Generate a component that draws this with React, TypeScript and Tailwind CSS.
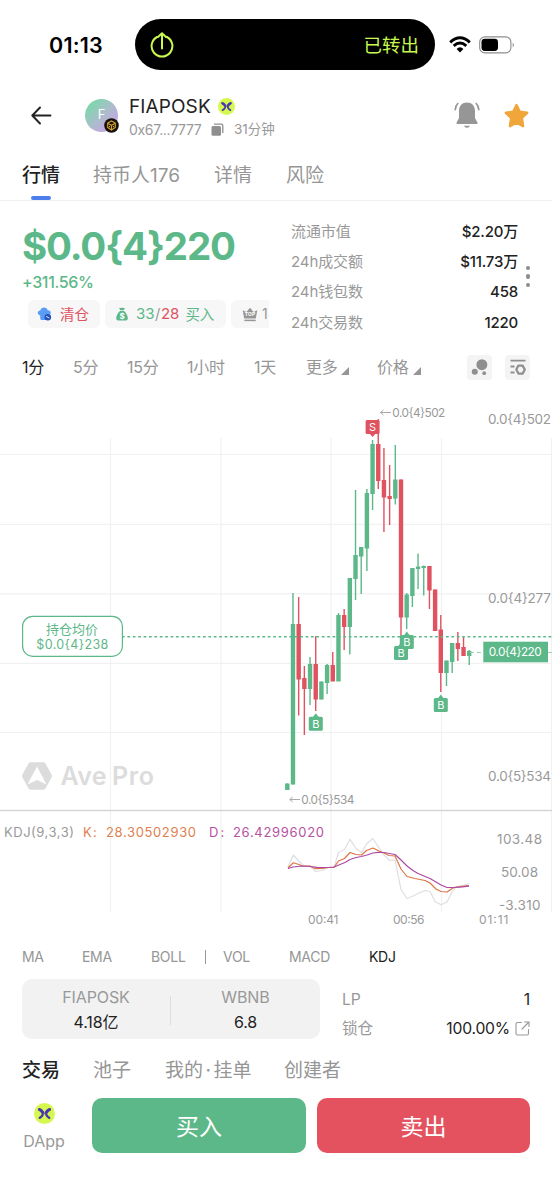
import { useState } from "react";
import { clsx } from "clsx";

interface Candle {
  high: number;
  low: number;
  top: number;
  bottom: number;
  up: boolean;
}

interface MarkerProps {
  x: number;
  y: number;
  label: "B" | "S";
}

const GREEN = "#5cb888";
const RED = "#e05260";
const GRAY = "#999999";

// high, low, body top, body bottom, direction (chart pixels)
const rawCandles: [number, number, number, number, number][] = [
  [783.5, 790, 783.5, 790, 1],
  [593, 784.5, 624, 784.5, 1],
  [597, 715.5, 624, 679.5, 0],
  [666, 735, 678, 689, 0],
  [657, 705, 664, 689, 1],
  [636, 711, 664, 699.5, 0],
  [681.5, 699.5, 681.5, 699.5, 1],
  [664, 694, 665, 683, 1],
  [652, 681, 665, 681.5, 0],
  [613, 681, 615, 681.5, 1],
  [609, 650, 615, 627, 0],
  [578, 654.5, 578, 627, 1],
  [490, 600, 555, 579, 1],
  [547, 594, 547, 556.5, 1],
  [489, 571, 493, 548.5, 1],
  [440, 510, 444, 494, 1],
  [419, 489, 444, 481, 0],
  [448, 532, 480, 497.5, 0],
  [465, 525, 496, 499, 0],
  [445, 504.5, 479.5, 498.5, 1],
  [479.5, 636, 479.5, 617.5, 0],
  [593, 629, 594.5, 617.5, 1],
  [568, 607, 568, 596, 1],
  [553.5, 589, 566.5, 569, 1],
  [565.5, 595.5, 566, 568, 1],
  [566, 609, 566, 590.5, 0],
  [589.5, 631, 589.5, 631, 0],
  [615, 692, 629.5, 673, 0],
  [660.5, 686, 660.5, 673, 1],
  [643, 673, 643, 662, 1],
  [632, 661, 643, 649, 0],
  [637, 656, 647, 656, 0],
  [650, 665, 651, 656, 1],
];

const candles: Candle[] = rawCandles.map(([high, low, top, bottom, up]) => ({
  high,
  low,
  top,
  bottom,
  up: up === 1,
}));

const stats = [
  { label: "流通市值", value: "$2.20万" },
  { label: "24h成交额", value: "$11.73万" },
  { label: "24h钱包数", value: "458" },
  { label: "24h交易数", value: "1220" },
];

const DAppLogo = ({ className }: { className?: string }) => (
  <svg viewBox="0 0 20 20" className={className}>
    <circle cx="10" cy="10" r="10" fill="#d5f84f" />
    <g fill="none" stroke="#4a35b0" strokeLinecap="round">
      <path d="M5.2 6.2Q7.2 6.9 8.3 9M14.8 6.2Q12.8 6.9 11.7 9" strokeWidth="3" />
      <path d="M5.5 14.2Q7.3 13.4 8.3 11.3M14.5 14.2Q12.7 13.4 11.7 11.3" strokeWidth="2.2" />
      <path d="M8.4 10.2H11.6" strokeWidth="0.8" />
    </g>
  </svg>
);

const StatusBar = () => (
  <div className="flex h-[89px] items-center">
    <span className="ml-[49px] w-[86px] pt-px text-[21.5px] font-semibold tracking-[0.2px] text-black">
      01:13
    </span>
    <div className="flex h-[51px] w-[300px] items-center justify-between rounded-full bg-black pr-4 pl-[15px] text-[#c9f84f]">
      <svg width="24" height="26" viewBox="0 0 24 26" fill="none" stroke="currentColor" strokeWidth="2" strokeLinecap="round" strokeLinejoin="round">
        <path d="M7 5A10.4 10.4 0 1 0 17 5" />
        <path d="M12 16.5V1.5M8 5L12 1.3L16 5" />
      </svg>
      <span className="pt-0.5 text-[18.5px]">已转出</span>
    </div>
    <svg className="ml-[14px]" width="22" height="17" viewBox="0 0 22 17">
      <path d="M1.2 6.3Q11-2.8 20.8 6.3" fill="none" stroke="#000" strokeWidth="3" />
      <path d="M4.7 9.9Q11 4.1 17.3 9.9" fill="none" stroke="#000" strokeWidth="2.8" />
      <path d="M7.6 12.9Q11 9.7 14.4 12.9L11 16.4Z" fill="#000" />
    </svg>
    <svg className="ml-2" width="37" height="18" viewBox="0 0 37 18">
      <rect x="0.7" y="0.9" width="31.2" height="16" rx="5.2" fill="none" stroke="#8d8d8d" strokeWidth="1.1" />
      <rect x="2.5" y="2.8" width="16.5" height="12.2" rx="3.4" fill="#000" />
      <path d="M33.7 6.5Q36 9 33.7 11.5Z" fill="#8d8d8d" />
    </svg>
  </div>
);

const TokenHeader = () => (
  <div className="flex h-[52px] items-center">
    <svg className="ml-[31px]" width="21" height="20" viewBox="0 0 21 20" fill="none" stroke="#222" strokeWidth="1.9" strokeLinecap="round" strokeLinejoin="round">
      <path d="M19.5 10.5H1.5M9 2.5L1.3 10.5L9 18.5" />
    </svg>
    <div className="relative ml-[33px] flex size-[33px] items-center justify-center rounded-full bg-linear-to-br from-[#82d3b0] from-20% to-[#c9a2e4] to-85% text-[13px] text-white">
      F
      <svg className="absolute right-[-1px] bottom-[-1px]" width="15" height="15" viewBox="0 0 15 15">
        <circle cx="7.5" cy="7.5" r="7.3" fill="#15120a" />
        <g fill="none" stroke="#d9a331" strokeWidth="1.1">
          <path d="M7.5 3L11.3 5.1V9.5L7.5 12L3.7 9.5V5.1Z" />
          <path d="M4 5.4L7.5 7.3L11 5.4M7.5 7.3V12M5.5 8V9.3M9.5 8V9.3" />
        </g>
      </svg>
    </div>
    <div className="ml-[11px] flex w-[324px] flex-col pt-[5px]">
      <div className="flex h-6 items-center gap-[7px]">
        <span className="w-[82px] pt-0.5 text-[19px] tracking-[0.1px] text-[#222]">FIAPOSK</span>
        <DAppLogo className="size-[17px]" />
      </div>
      <div className="flex h-[22px] items-center text-sm text-[#999]">
        <span className="w-[82px] tracking-[-0.3px]">0x67...7777</span>
        <svg width="13" height="13" viewBox="0 0 13 13">
          <rect x="0.5" y="3" width="9.5" height="9.7" rx="1.5" fill="#8f8f8f" />
          <path d="M3 1.2H10.3Q11.8 1.2 11.8 2.7V10" fill="none" stroke="#8f8f8f" strokeWidth="1.3" />
        </svg>
        <span className="ml-[10px] text-[13.5px]">31分钟</span>
      </div>
    </div>
    <svg width="28" height="28" viewBox="0 0 28 28">
      <g fill="#969696">
        <path d="M14 1.5C18.8 1.5 22 4.8 22 10V17L24.5 21.7Q25 23 23.5 23H4.5Q3 23 3.5 21.7L6 17V10C6 4.8 9.2 1.5 14 1.5Z" />
        <path d="M11 24.8H17Q16.2 26.8 14 26.8Q11.8 26.8 11 24.8Z" />
      </g>
      <path d="M4.8 2.5Q2.5 4.8 2.2 8.6M23.2 2.5Q25.5 4.8 25.8 8.6" fill="none" stroke="#969696" strokeWidth="1.7" strokeLinecap="round" />
    </svg>
    <svg className="ml-[22px]" width="27" height="27" viewBox="0 0 27 27">
      <path d="M13.5 3L16.8 9.7L24.2 10.8L18.9 16L20.1 24.2L13.5 20.7L6.9 24.2L8.1 16L2.8 10.8L10.2 9.7Z" fill="#f0a63a" stroke="#f0a63a" strokeWidth="2.4" strokeLinejoin="round" />
    </svg>
  </div>
);

const PageTabs = () => {
  const [active, setActive] = useState("行情");
  const tabs = ["行情", "持币人176", "详情", "风险"];

  return (
    <div className="grid h-[60px] grid-cols-[71px_121px_72px_60px] border-b border-[#f2f2f2] pl-[22px] text-[19px]">
      {tabs.map((tab) => (
        <button
          key={tab}
          onClick={() => setActive(tab)}
          className={clsx(
            "flex flex-col items-start pt-[21px] leading-7 whitespace-nowrap",
            active === tab ? "font-medium text-[#222]" : "text-[#969696]"
          )}
        >
          {tab}
          {active === tab && <span className="mt-[6px] ml-[9px] h-1 w-5 rounded-sm bg-[#4d7eee]" />}
        </button>
      ))}
    </div>
  );
};

const Summary = () => (
  <div className="flex h-[143px]">
    <div className="w-[269px] pt-[19px] pl-[22px]">
      <div className="h-[52px] text-[38.5px] leading-[52px] font-bold tracking-[-1.15px] text-[#5cb888]">
        $0.0&#123;4&#125;220
      </div>
      <div className="h-5 text-[16px] leading-5 font-medium tracking-[-0.35px] text-[#5cb888]">+311.56%</div>
      <div className="mt-2 ml-[6px] flex h-7 gap-[5px] text-[15px] whitespace-nowrap">
        <div className="flex w-[72px] shrink-0 items-center rounded-md bg-[#f7f7f7] pl-[9px] text-[#e05260]">
          <svg className="mr-2" width="15" height="14" viewBox="0 0 15 14">
            <path d="M3.2 8.5C-.4 7.6.2 3.3 3.4 3.4C4.2-.3 9.8-.3 10.7 3.2C14.2 3 14.8 7.4 11.5 8.3V13H4.5Q3.2 13 3.2 11Z" fill="#5b9cf5" />
            <circle cx="10.8" cy="10.2" r="3.3" fill="#2553bb" />
            <path d="M9.2 9.4L12.3 11" stroke="#fff" strokeWidth="0.9" />
          </svg>
          <span className="pt-0.5 text-[14.5px]">清仓</span>
        </div>
        <div className="flex w-[121px] shrink-0 items-center rounded-md bg-[#f7f7f7] pl-[11px] text-[#5cb888]">
          <svg className="mr-2" width="12" height="14" viewBox="0 0 12 14">
            <path d="M3 .8Q4.5 1.5 6 .5Q7.5 1.5 9 .8L7.8 3.2H4.2Z" fill={GREEN} />
            <path d="M4 4H8C10 5.5 12 9 11.8 11.6Q11.6 13.5 10 13.5H2Q.4 13.5.2 11.6C0 9 2 5.5 4 4Z" fill={GREEN} />
            <text x="6" y="11.9" textAnchor="middle" fontSize="8" fontWeight="700" fill="#fff">$</text>
          </svg>
          <span className="pt-px">33</span>
          <span className="px-[0.5px] pt-px text-[#999]">/</span>
          <span className="pt-px text-[#e05260]">28</span>
          <span className="ml-[6px] pt-0.5 text-[14.5px]">买入</span>
        </div>
        <div className="flex w-[38px] shrink-0 items-center rounded-l-md bg-[#f7f7f7] pl-[11px] text-sm text-[#999]">
          <svg className="mr-1" width="16" height="15" viewBox="0 0 16 15">
            <path d="M.7 3.3L4.4 5L8 .8L11.6 5L15.3 3.3L13.8 11.5H2.2Z" fill="#969696" />
            <path d="M2.3 13.4H13.7" stroke="#969696" strokeWidth="1.5" />
            <text x="8" y="9.3" textAnchor="middle" fontSize="5" fontWeight="700" fill="#fff">TOP</text>
          </svg>
          1
        </div>
      </div>
    </div>
    <div className="ml-[22px] flex w-[227px] flex-col pt-4">
      {stats.map(({ label, value }) => (
        <div key={label} className="flex h-[30.3px] items-center justify-between text-[15px]">
          <span className="tracking-[-0.1px] text-[#999]">{label}</span>
          <span className="font-medium tracking-[-0.2px] text-[#222]">{value}</span>
        </div>
      ))}
    </div>
    <div className="ml-2 flex flex-col gap-1 pt-[65px]">
      <span className="size-[4.4px] rounded-full bg-[#8c8c8c]" />
      <span className="size-[4.4px] rounded-full bg-[#8c8c8c]" />
      <span className="size-[4.4px] rounded-full bg-[#8c8c8c]" />
    </div>
  </div>
);

const Caret = () => (
  <svg className="mt-2" width="8" height="8" viewBox="0 0 8 8">
    <path d="M8 0V8H0Z" fill="#969696" />
  </svg>
);

const IntervalBar = () => (
  <div className="flex h-[46px] items-center pl-[22px] text-[16px] text-[#969696]">
    <div className="grid w-[445px] grid-cols-[51px_54px_60px_67px_52px_71px_90px] items-center tracking-[-0.2px] whitespace-nowrap">
      <span className="text-[#222]">1分</span>
      <span>5分</span>
      <span>15分</span>
      <span>1小时</span>
      <span>1天</span>
      <span className="flex items-center gap-[3px]">更多<Caret /></span>
      <span className="flex items-center gap-1">价格<Caret /></span>
    </div>
    <button className="flex size-[25px] items-center justify-center rounded bg-[#f4f4f4]">
      <svg width="17" height="17" viewBox="0 0 18 18" fill="#8f8f8f">
        <circle cx="11.5" cy="6" r="5.8" />
        <circle cx="4" cy="13.5" r="3.2" />
        <circle cx="14" cy="15" r="2" />
      </svg>
    </button>
    <button className="ml-[13px] flex size-[25px] items-center justify-center rounded bg-[#f4f4f4]">
      <svg width="16" height="16" viewBox="0 0 16 16" fill="none" stroke="#8f8f8f" strokeWidth="1.8">
        <path d="M.5 1.7H15.5M.5 7.5H4.5M.5 13.5H4.5" />
        <path d="M8.4 6.6H12.6L14.8 10.6L12.6 14.6H8.4L6.3 10.6Z" strokeWidth="2.2" strokeLinejoin="round" />
      </svg>
    </button>
  </div>
);

const Marker = ({ x, y, label }: MarkerProps) => {
  const isBuy = label === "B";
  const color = isBuy ? GREEN : RED;
  return (
    <g>
      <path d={isBuy ? `M${x - 3} ${y - 6.5}L${x} ${y - 10.5}L${x + 3} ${y - 6.5}Z` : `M${x - 3} ${y + 6.5}L${x} ${y + 10}L${x + 3} ${y + 6.5}Z`} fill={color} />
      <rect x={x - 7} y={y - 7} width="14" height="14" rx="1.5" fill={color} />
      <text x={x} y={y + 4} textAnchor="middle" fontSize="11" fill="#fff">{label}</text>
    </g>
  );
};

const PriceChart = () => (
  <svg className="block" width="552" height="545" viewBox="0 390 552 545" fill={GRAY} fontSize="13.5">
    <g stroke="#f1f1f1" strokeWidth="1.2">
      {[110.5, 221, 331, 441.5, 551.5].map((x) => (
        <line key={x} x1={x} x2={x} y1="438" y2="912" />
      ))}
      {[454.5, 524.3, 593.8, 663.3, 732.5].map((y) => (
        <line key={y} x1="0" x2="552" y1={y} y2={y} />
      ))}
    </g>
    <line x1="0" x2="552" y1="810.5" y2="810.5" stroke="#d6d6d6" strokeWidth="1.3" />

    {/* watermark */}
    <path d="M30.5 763H43.5Q44.5 763 45 764L51 775Q51.5 776 51 777L45 788Q44.5 789 43.5 789H30.5Q29.5 789 29 788L23 777Q22.5 776 23 775L29 764Q29.5 763 30.5 763Z" fill="#dcdcdc" stroke="#dcdcdc" strokeWidth="1.5" />
    <path d="M37 766.5L46.5 784.5L37 780L27.5 784.5Z" fill="#fff" />
    <text x="60.5" y="785" fontSize="25" fontWeight="600" fill="#dcdcdc" textLength="46">Ave</text>
    <text x="112" y="785" fontSize="25" fontWeight="600" fill="#dcdcdc" textLength="42">Pro</text>

    {candles.map((c, i) => {
      const x = 287.3 + i * 5.685;
      const color = c.up ? GREEN : RED;
      return (
        <g key={i} fill={color}>
          <rect x={x - 0.7} y={c.high} width="1.4" height={c.low - c.high} />
          <rect x={x - 2.2} y={c.top} width="4.4" height={c.bottom - c.top} />
        </g>
      );
    })}

    {/* average holding price */}
    <line x1="122" x2="552" y1="636.7" y2="636.7" stroke={GREEN} strokeWidth="1.4" strokeDasharray="2.7 2.7" />
    <rect x="22.6" y="616.3" width="99.8" height="40" rx="10" fill="#fff" stroke={GREEN} strokeWidth="1.2" />
    <g fill={GREEN} textAnchor="middle" fontSize="13">
      <text x="72" y="633.5">持仓均价</text>
      <text x="72.3" y="648.8" fontSize="12.5" textLength="72">$0.0&#123;4&#125;238</text>
    </g>

    <Marker x={372.6} y={427} label="S" />
    <Marker x={315.8} y={723.7} label="B" />
    <Marker x={401} y={653} label="B" />
    <Marker x={406.8} y={642} label="B" />
    <Marker x={440.8} y={705} label="B" />

    <circle cx="469" cy="652.5" r="2" fill={GREEN} />
    <path d="M470 652.5H483M548 652.5H552" stroke="#9ccfb3" strokeDasharray="4 3" />
    <rect x="483.3" y="641.7" width="64.7" height="20.6" fill={GREEN} />
    <text x="488.7" y="656.4" fontSize="11.8" fill="#fff" textLength="53">0.0&#123;4&#125;220</text>

    <path d="M391 412.5H380.5M383.5 410L380.5 412.5L383.5 415M300 799.5H289.8M292.8 797L289.8 799.5L292.8 802" fill="none" stroke="#aaa" />
    <text x="392.3" y="416.8" fontSize="11.8" textLength="53">0.0&#123;4&#125;502</text>
    <text x="301.3" y="804" fontSize="11.8" textLength="53">0.0&#123;5&#125;534</text>

    <text x="488" y="423.7" textLength="63">0.0&#123;4&#125;502</text>
    <text x="488" y="602.5" textLength="63">0.0&#123;4&#125;277</text>
    <text x="488" y="780.7" textLength="63">0.0&#123;5&#125;534</text>

    {/* KDJ panel */}
    <g fontSize="13">
      <text x="4" y="837" textLength="70">KDJ(9,3,3)</text>
      <g fill="#e07f4f">
        <text x="83" y="837">K</text>
        <text x="93" y="837">:</text>
        <text x="106" y="837" textLength="90">28.30502930</text>
      </g>
      <g fill="#b6529f">
        <text x="209" y="837">D</text>
        <text x="220.5" y="837">:</text>
        <text x="233" y="837" textLength="91">26.42996020</text>
      </g>
    </g>
    <g fill="none" strokeWidth="1.2" strokeLinejoin="round">
      <path d="M288 867L293.3 855L299 861.5L304 866L310 866L315.5 871.5L322 870.5L328 867.5H334L338.5 852.5L344.5 849.5L350 839.3L356 848.5L361.5 852.5L366.5 844L372.8 838.5L378.5 847L384 855L389.7 860.5L395 860L401 889.5L407 898.5L413 896L420 892.5L425 890.5L430 891.5L435 901.5L441 904.8L447 902L452 892L456 887L463 885.5L469 883.5" stroke="#dedee3" />
      <path d="M288 868L293.3 862.8L299 864.5L302 866H310L315.5 868.7L322 868.5L328 867.5H334L338.5 861L344.5 858.5L350 852.5L356 854.5L361.5 855L366.5 850.5L373 848L379 851L384 853L389 855.5L395 856L401 869L407 876.5L415 878.5L425 880.5L430 883L436 889L441 891.5L447 892L453 888L459 886.5L469 885.5" stroke="#dd7543" />
      <path d="M288 868.5L293 867L302 866L310 866.5L317 867.3L328 867.5L334 867L340 864.5L345 862.5L350 859.5L356 857.5L361.5 856.5L367 855L373 853L378 852.3L384 852.5L395 854.5L401 860L407 866L413 870.5L418 873.5L424 876L430 878.5L436 882L441 885L447 887.5H453L460 887.2L469 886.2" stroke="#ac49a4" />
    </g>
    <text x="497" y="844" textLength="45">103.48</text>
    <text x="501" y="877" textLength="37">50.08</text>
    <text x="499" y="910" textLength="41.5">-3.310</text>
    <g fontSize="12">
      <text x="308" y="923.7" textLength="30.5">00:41</text>
      <text x="393" y="923.7" textLength="31.5">00:56</text>
      <text x="479" y="923.7" textLength="29.5">01:11</text>
    </g>
  </svg>
);

const IndicatorBar = () => (
  <div className="grid h-11 grid-cols-[60px_69px_54px_18px_66px_80px_40px] items-center pl-[22px] text-sm tracking-[-0.3px] text-[#969696]">
    <span>MA</span>
    <span>EMA</span>
    <span>BOLL</span>
    <span className="h-3.5 w-px bg-[#999]" />
    <span>VOL</span>
    <span>MACD</span>
    <span className="text-[#222]">KDJ</span>
  </div>
);

const PoolInfo = () => (
  <div className="flex h-[60px] pl-[22px]">
    <div className="flex w-[298px] items-center rounded-[10px] bg-[#f2f2f2] pt-0.5 text-center text-[16px] leading-[25px] text-[#999]">
      <div className="w-[148px] tracking-[-0.1px]">
        <p>FIAPOSK</p>
        <p className="text-[#222]">4.18亿</p>
      </div>
      <span className="h-[29px] w-px bg-[#ddd]" />
      <div className="w-[149px] tracking-[-0.1px]">
        <p>WBNB</p>
        <p className="text-[#222]">6.8</p>
      </div>
    </div>
    <div className="ml-[22px] w-[188px] pt-[6px] text-[15.7px] tracking-[-0.2px] text-[#999]">
      <div className="flex h-[29px] items-center justify-between">
        <span>LP</span>
        <span className="text-[#222]">1</span>
      </div>
      <div className="flex h-[29px] items-center">
        <span>锁仓</span>
        <span className="ml-auto text-[#222]">100.00%</span>
        <svg className="ml-[5px]" width="15" height="15" viewBox="0 0 15 15" fill="none" stroke="#999" strokeWidth="1.1" strokeLinecap="round">
          <path d="M6.5 1.5H2.5Q1 1.5 1 3V12.5Q1 14 2.5 14H12Q13.5 14 13.5 12.5V8.5M9.5 1H14V5.5M14 1L7 8" />
        </svg>
      </div>
    </div>
  </div>
);

const ActivityTabs = () => (
  <div className="grid h-[59px] grid-cols-[71px_72px_119px_70px] items-center pt-[6px] pl-[22px] text-[19px] whitespace-nowrap text-[#969696]">
    <span className="font-medium text-[#222]">交易</span>
    <span>池子</span>
    <span>我的<span className="mx-[2.5px]">·</span>挂单</span>
    <span>创建者</span>
  </div>
);

const TradeBar = () => (
  <div className="flex h-[55px] pl-[22px] text-[23px] text-white">
    <div className="flex w-[44px] flex-col items-center pt-[5px]">
      <DAppLogo className="size-[21px]" />
      <span className="mt-[5px] text-[16px] leading-6 text-[#999]">DApp</span>
    </div>
    <button className="ml-[26px] w-[214px] rounded-[10px] bg-[#5cb888] pt-[3px]">买入</button>
    <button className="ml-[11px] w-[213px] rounded-[10px] bg-[#e4525f] pt-[3px]">卖出</button>
  </div>
);

const App = () => {
  return (
    <main className="h-[1200px] w-[552px] overflow-hidden bg-white font-['Inter','Noto_Sans_CJK_SC',sans-serif]">
      <StatusBar />
      <TokenHeader />
      <PageTabs />
      <Summary />
      <IntervalBar />
      <PriceChart />
      <IndicatorBar />
      <PoolInfo />
      <ActivityTabs />
      <TradeBar />
    </main>
  );
};

export default App;
